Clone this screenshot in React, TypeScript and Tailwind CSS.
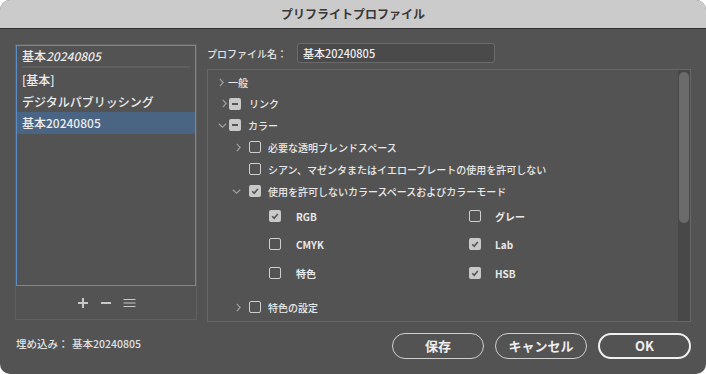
import React from 'react';

function ChevronRight() {
    return (
        <svg width="5" height="9" viewBox="0 0 5 9" className="shrink-0">
            <path d="M0.8 0.8 L4.2 4.5 L0.8 8.2" fill="none" stroke="#a0a0a0" strokeWidth="1.2" />
        </svg>
    );
}

function ChevronDown() {
    return (
        <svg width="9" height="5" viewBox="0 0 9 5" className="shrink-0">
            <path d="M0.8 0.8 L4.5 4.2 L8.2 0.8" fill="none" stroke="#a0a0a0" strokeWidth="1.2" />
        </svg>
    );
}

function Box({ state }: { state: 'off' | 'on' | 'mixed' }) {
    if (state === 'off') {
        return <span className="block w-[12px] h-[12px] shrink-0 rounded-[2px] border border-[#cfcfcf]" />;
    }
    return (
        <span className="flex w-[12px] h-[12px] shrink-0 items-center justify-center rounded-[2px] bg-[#c9c9c9]">
            {state === 'on' ? (
                <svg width="12" height="12" viewBox="0 0 12 12">
                    <path d="M3.2 6.3 L5.2 8.3 L8.8 3.9" fill="none" stroke="#555555" strokeWidth="1.6" />
                </svg>
            ) : (
                <span className="block w-[6px] h-[2px] bg-[#555555]" />
            )}
        </span>
    );
}

export default function App() {
    return (
        <div className="w-[706px] h-[374px] bg-white font-['Noto_Sans_CJK_JP',sans-serif]">
            <div className="w-full h-full rounded-[10px] overflow-hidden flex flex-col bg-[#535353]">
                {/* title bar */}
                <div className="h-[29px] shrink-0 bg-[#cbcbcb] border-b border-[#303030] flex items-center justify-center text-[12px] font-bold text-[#383838]">
                    プリフライトプロファイル
                </div>

                <div className="flex flex-1 px-[15px]">
                    {/* left column */}
                    <div className="w-[182px] pt-[15px] flex flex-col">
                        <div className="h-[276px] border border-[#606060] flex flex-col">
                            <div className="h-[241px] border border-[#5b8ec8] flex flex-col text-[12px] font-medium text-[#ececec]">
                                <div className="h-[20px] flex items-center px-[5px]">
                                    基本<span className="italic">20240805</span>
                                </div>
                                <div className="mx-[5px] h-[2px] bg-[#5f5f5f]" />
                                <div className="h-[22px] flex items-center px-[5px] mt-[1px]">[基本]</div>
                                <div className="h-[21px] flex items-center px-[5px]">デジタルパブリッシング</div>
                                <div className="h-[22px] flex items-center px-[5px] bg-[#4a6583]">基本20240805</div>
                            </div>
                            <div className="flex-1 flex items-center justify-center gap-[11px] pt-[1px]">
                                <svg width="12" height="12" viewBox="0 0 12 12">
                                    <path d="M6 1 V11 M1 6 H11" stroke="#c8c8c8" strokeWidth="2" />
                                </svg>
                                <svg width="12" height="12" viewBox="0 0 12 12">
                                    <path d="M1 6 H11" stroke="#c8c8c8" strokeWidth="2" />
                                </svg>
                                <svg width="13" height="10" viewBox="0 0 13 10">
                                    <path d="M0.5 1.5 H12.5 M0.5 5 H12.5 M0.5 8.5 H12.5" stroke="#c8c8c8" strokeWidth="1" />
                                </svg>
                            </div>
                        </div>
                        <div className="mt-[16px] flex items-center text-[10.5px] font-medium text-[#e0e0e0]">
                            <span className="w-[57px] pl-[1px]">埋め込み：</span>
                            <span>基本20240805</span>
                        </div>
                    </div>

                    {/* right column */}
                    <div className="ml-[10px] w-[484px] pt-[14px] flex flex-col">
                        <div className="h-[20px] flex items-center">
                            <span className="w-[90px] text-[10px] font-medium text-[#e4e4e4]">プロファイル名：</span>
                            <div className="w-[198px] h-[20px] flex items-center px-[5px] rounded-[3px] border border-[#6b6b6b] bg-[#4a4a4a] text-[11px] font-medium text-[#eeeeee]">
                                基本20240805
                            </div>
                        </div>

                        <div className="mt-[6px] h-[253px] border border-[#676767] flex text-[10px] font-medium text-[#e8e8e8]">
                            <div className="flex-1 pt-[1px] flex flex-col">
                                <div className="h-[22px] flex items-center pl-[11px]">
                                    <ChevronRight />
                                    <span className="ml-[4px]">一般</span>
                                </div>
                                <div className="h-[21px] flex items-center pl-[14px]">
                                    <ChevronRight />
                                    <span className="ml-[2px]"><Box state="mixed" /></span>
                                    <span className="ml-[8px]">リンク</span>
                                </div>
                                <div className="h-[22px] flex items-center pl-[10px]">
                                    <ChevronDown />
                                    <span className="ml-[2px]"><Box state="mixed" /></span>
                                    <span className="ml-[7px]">カラー</span>
                                </div>
                                <div className="h-[22px] flex items-center pl-[28px]">
                                    <ChevronRight />
                                    <span className="ml-[8px]"><Box state="off" /></span>
                                    <span className="ml-[7px]">必要な透明ブレンドスペース</span>
                                </div>
                                <div className="h-[22px] flex items-center pl-[41px]">
                                    <Box state="off" />
                                    <span className="ml-[7px]">シアン、マゼンタまたはイエロープレートの使用を許可しない</span>
                                </div>
                                <div className="h-[22px] flex items-center pl-[24px]">
                                    <ChevronDown />
                                    <span className="ml-[8px]"><Box state="on" /></span>
                                    <span className="ml-[7px]">使用を許可しないカラースペースおよびカラーモード</span>
                                </div>

                                {[
                                    { a: 'RGB', aOn: true, b: 'グレー', bOn: false, h: 'h-[28px]' },
                                    { a: 'CMYK', aOn: false, b: 'Lab', bOn: true, h: 'h-[28px]' },
                                    { a: '特色', aOn: false, b: 'HSB', bOn: true, h: 'h-[30px]' },
                                ].map((r) => (
                                    <div key={r.a} className={`${r.h} flex items-center`}>
                                        <div className="w-[261px] flex items-center pl-[61px]">
                                            <Box state={r.aOn ? 'on' : 'off'} />
                                            <span className="ml-[15px] font-semibold">{r.a}</span>
                                        </div>
                                        <div className="flex items-center">
                                            <Box state={r.bOn ? 'on' : 'off'} />
                                            <span className="ml-[14px] font-semibold">{r.b}</span>
                                        </div>
                                    </div>
                                ))}

                                <div className="mt-[8px] h-[22px] flex items-center pl-[28px]">
                                    <ChevronRight />
                                    <span className="ml-[8px]"><Box state="off" /></span>
                                    <span className="ml-[7px]">特色の設定</span>
                                </div>
                            </div>
                            <div className="w-[12px] bg-[#484848] pt-[2px] flex justify-center">
                                <div className="w-[10px] h-[151px] rounded-full bg-[#6b6b6b]" />
                            </div>
                        </div>

                        <div className="mt-[11px] flex justify-end gap-[11px] text-[13px] font-bold text-[#eeeeee]">
                            <button className="w-[92px] h-[26px] rounded-full border-[1.5px] border-[#cfcfcf] flex items-center justify-center">
                                保存
                            </button>
                            <button className="w-[92px] h-[26px] rounded-full border-[1.5px] border-[#cfcfcf] flex items-center justify-center">
                                キャンセル
                            </button>
                            <button className="w-[93px] h-[26px] rounded-full border-2 border-[#f0f0f0] flex items-center justify-center">
                                OK
                            </button>
                        </div>
                    </div>
                </div>
            </div>
        </div>
    );
}
